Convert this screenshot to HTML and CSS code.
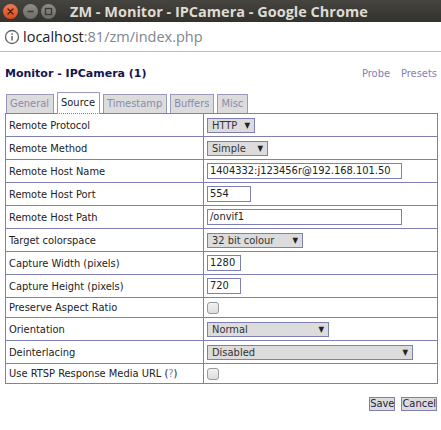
FILE: index.html
```html
<!DOCTYPE html>
<html>
<head>
<meta charset="utf-8">
<title>ZM - Monitor - IPCamera</title>
<link rel="stylesheet" href="styles.css">
</head>
<body>
<div class="titlebar">
  <div class="winbtns">
    <span class="wb close"><svg width="15" height="15" viewBox="0 0 15 15"><path d="M5 5 L10 10 M10 5 L5 10" stroke="#4a1c0c" stroke-width="1.4" stroke-linecap="round"/></svg></span>
    <span class="wb"><svg width="15" height="15" viewBox="0 0 15 15"><path d="M4.5 7.5 H10.5" stroke="#3a3935" stroke-width="1.6"/></svg></span>
    <span class="wb"><svg width="15" height="15" viewBox="0 0 15 15"><rect x="4.5" y="4.5" width="6" height="6" fill="none" stroke="#3a3935" stroke-width="1.3"/></svg></span>
  </div>
  <div class="wintitle">ZM - Monitor - IPCamera - Google Chrome</div>
</div>
<div class="addressbar">
  <svg class="info" width="16" height="16" viewBox="0 0 16 16"><circle cx="8" cy="8" r="6.5" fill="none" stroke="#5f6368" stroke-width="1.3"/><rect x="7.3" y="7" width="1.5" height="4.5" fill="#5f6368"/><rect x="7.3" y="4.3" width="1.5" height="1.5" fill="#5f6368"/></svg>
  <span class="host">localhost</span><span class="path">:81/zm/index.php</span>
</div>
<div class="page">
  <div class="header">
    <h2 class="heading">Monitor - IPCamera (1)</h2>
    <div class="links"><a href="#">Probe</a><a href="#">Presets</a></div>
  </div>
  <ul class="tabs">
    <li class="tab">General</li>
    <li class="tab active">Source</li>
    <li class="tab">Timestamp</li>
    <li class="tab">Buffers</li>
    <li class="tab">Misc</li>
  </ul>
  <table class="form">
    <tr><td class="label">Remote Protocol</td><td class="val"><span class="select w-http"><span>HTTP</span><span class="arr">▼</span></span></td></tr>
    <tr><td class="label">Remote Method</td><td class="val"><span class="select w-simple"><span>Simple</span><span class="arr">▼</span></span></td></tr>
    <tr><td class="label">Remote Host Name</td><td class="val"><span class="input w-long">1404332:j123456r@192.168.101.50</span></td></tr>
    <tr><td class="label">Remote Host Port</td><td class="val"><span class="input w-port">554</span></td></tr>
    <tr><td class="label">Remote Host Path</td><td class="val"><span class="input w-long">/onvif1</span></td></tr>
    <tr><td class="label">Target colorspace</td><td class="val"><span class="select w-colour"><span>32 bit colour</span><span class="arr">▼</span></span></td></tr>
    <tr><td class="label">Capture Width (pixels)</td><td class="val"><span class="input w-num">1280</span></td></tr>
    <tr><td class="label">Capture Height (pixels)</td><td class="val"><span class="input w-num">720</span></td></tr>
    <tr class="short"><td class="label">Preserve Aspect Ratio</td><td class="val"><span class="check"></span></td></tr>
    <tr><td class="label">Orientation</td><td class="val"><span class="select w-orient"><span>Normal</span><span class="arr">▼</span></span></td></tr>
    <tr><td class="label">Deinterlacing</td><td class="val"><span class="select w-deint"><span>Disabled</span><span class="arr">▼</span></span></td></tr>
    <tr class="short"><td class="label">Use RTSP Response Media URL (<a href="#">?</a>)</td><td class="val"><span class="check"></span></td></tr>
  </table>
  <div class="actions">
    <button class="btn">Save</button>
    <button class="btn">Cancel</button>
  </div>
</div>
</body>
</html>
```

FILE: styles.css
```css
html, body {
  margin: 0;
  padding: 0;
  background: #ffffff;
}
body {
  width: 441px;
  height: 430px;
  overflow: hidden;
}
.titlebar {
  height: 22px;
  background: linear-gradient(#45443f, #33322e);
  display: flex;
  align-items: center;
}
.winbtns {
  display: flex;
  gap: 3px;
  padding-left: 3px;
  width: 64px;
}
.wb {
  width: 15px;
  height: 15px;
  border-radius: 50%;
  background: linear-gradient(#8e8d88, #6c6b66);
  display: flex;
}
.wb.close {
  background: linear-gradient(#f07a50, #d9491f);
}
.winbtns .wb:nth-child(2) { margin-left: 2px; }
.wintitle {
  color: #dfdbd2;
  font-family: "Open Sans", "DejaVu Sans", sans-serif;
  font-weight: 700;
  font-size: 14.5px;
  padding-left: 3px;
  white-space: nowrap;
}
.addressbar {
  height: 29px;
  border-bottom: 1px solid #bdbdbd;
  display: flex;
  align-items: center;
  font-family: "Open Sans", "DejaVu Sans", sans-serif;
  font-size: 14.5px;
}
.info {
  margin-left: 4px;
  margin-right: 3px;
}
.host { color: #202124; }
.path { color: #80868b; }

.page {
  padding: 13px 4px 0 5px;
  font-family: "DejaVu Sans Condensed", "DejaVu Sans", sans-serif;
  font-stretch: condensed;
  font-size: 11px;
  color: #222222;
}
.header {
  display: flex;
  justify-content: space-between;
  align-items: center;
  height: 16px;
}
.heading {
  margin: 0;
  font-family: "DejaVu Sans", sans-serif;
  font-stretch: normal;
  font-size: 11px;
  font-weight: bold;
  color: #141452;
}
.links {
  display: flex;
  gap: 11px;
}
.links a, .label a {
  color: #7f7fb2;
  text-decoration: none;
}
.tabs {
  list-style: none;
  margin: 11px 0 0 1px;
  padding: 0;
  display: flex;
  gap: 3px;
  align-items: flex-end;
}
.tab {
  height: 18px;
  line-height: 18px;
  padding: 0 4px 0 3px;
  background: #dcdcdc;
  border: 1px solid #9a9ac0;
  border-bottom: none;
  color: #8a8aae;
  font-size: 11px;
}
.tab.active {
  background: #ffffff;
  color: #222222;
  height: 20px;
  line-height: 20px;
  border-bottom: 1px dotted #7f7fb2;
  margin-bottom: -1px;
  position: relative;
}
.form {
  border-collapse: collapse;
  width: 433px;
  margin-top: 0;
}
.form td {
  border: 1px solid #7f7fb2;
  height: 22px;
  padding: 0 3px;
  vertical-align: middle;
}
.form tr.short td {
  height: 19px;
}
.form td.label {
  width: 191px;
  padding-left: 3px;
}
.select {
  display: inline-flex;
  justify-content: space-between;
  align-items: center;
  box-sizing: border-box;
  height: 15px;
  padding: 0 4px 0 4px;
  background: #dcdcdc;
  border: 1px solid #7f7fb2;
  vertical-align: middle;
  color: #333333;
}
.arr {
  font-size: 8px;
  color: #222222;
}
.w-http { width: 48px; }
.w-simple { width: 61px; }
.w-colour { width: 96px; }
.w-orient { width: 122px; }
.w-deint { width: 206px; }
.input {
  display: inline-block;
  box-sizing: border-box;
  height: 16px;
  line-height: 14px;
  padding: 0 2px;
  border: 1px solid #7f7fb2;
  background: #ffffff;
  vertical-align: middle;
  color: #222222;
}
.w-long { width: 195px; }
.w-port { width: 44px; }
.w-num { width: 34px; }
.check {
  display: inline-block;
  box-sizing: border-box;
  width: 12px;
  height: 12px;
  border: 1px solid #9a9a9a;
  border-radius: 3px;
  background: linear-gradient(#f2f2f2, #dddddd);
  vertical-align: middle;
}
.actions {
  display: flex;
  justify-content: flex-end;
  gap: 6px;
  margin-top: 13px;
  padding-right: 0;
}
.btn {
  font-family: "DejaVu Sans Condensed", "DejaVu Sans", sans-serif;
  font-stretch: condensed;
  font-size: 11px;
  height: 14px;
  padding: 0;
  margin: 0;
  line-height: 12px;
  background: #dcdcdc;
  border: 1px solid #7f7fb2;
  color: #222244;
}
```
